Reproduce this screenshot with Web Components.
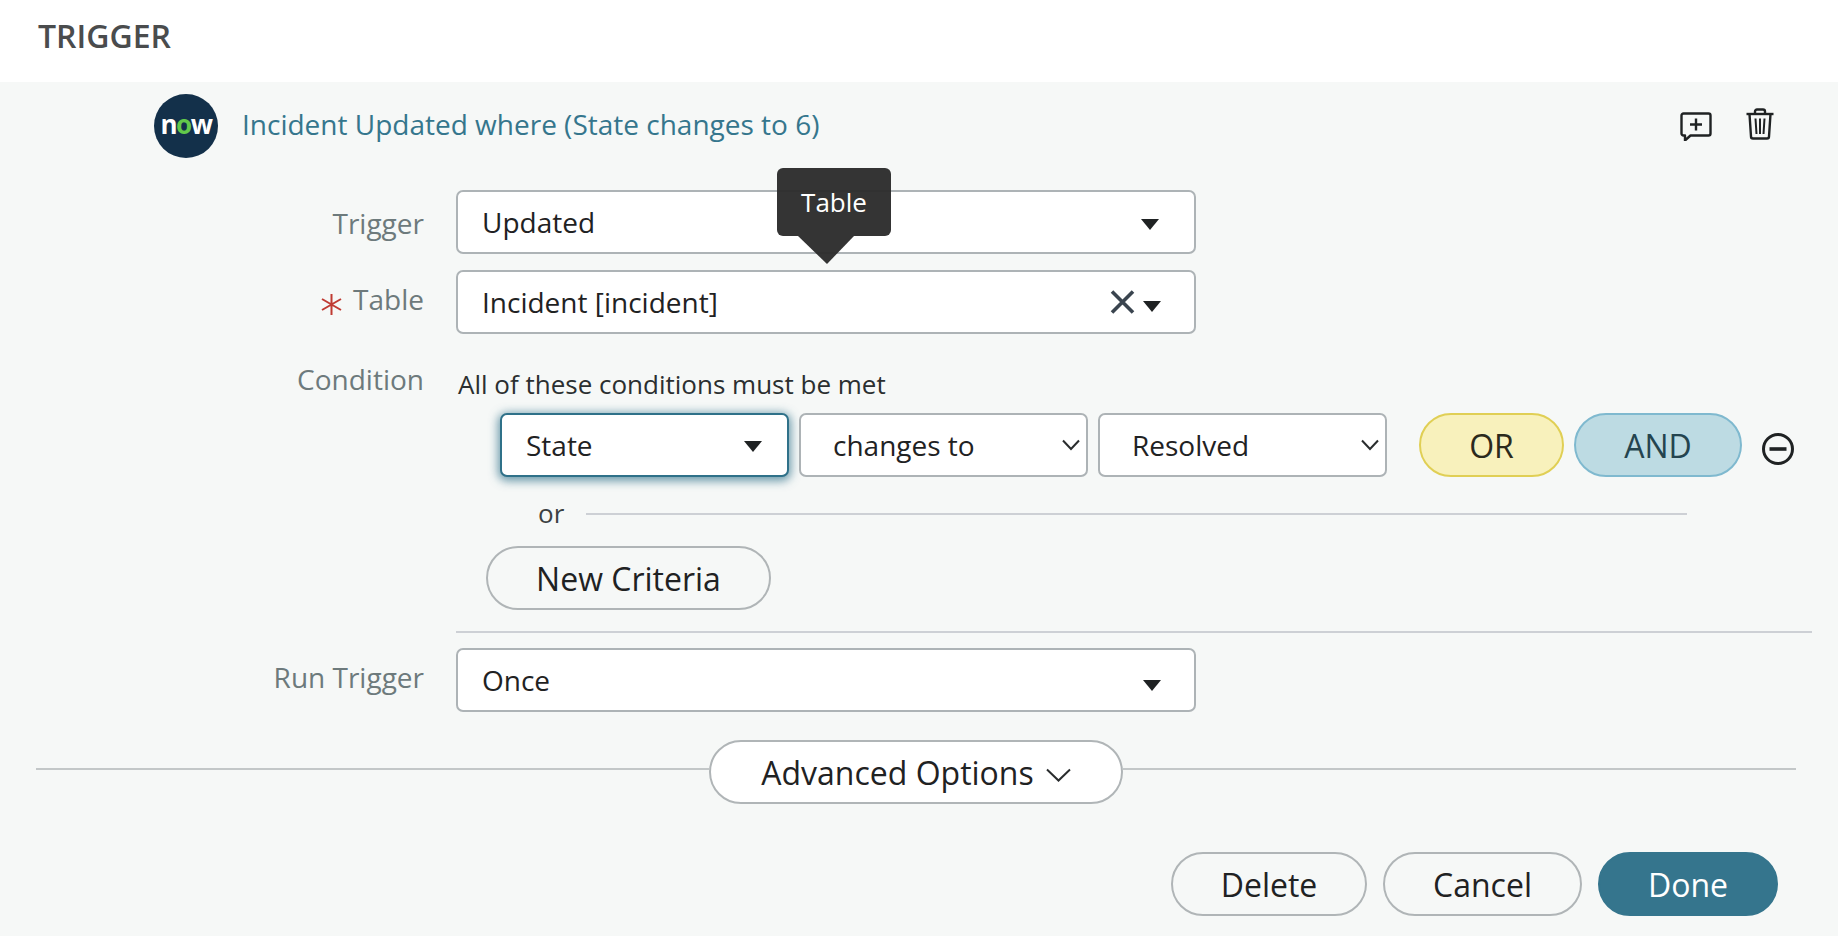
<!DOCTYPE html>
<html lang="en">
<head>
<meta charset="utf-8">
<title>Trigger</title>
<style>
  html, body { margin: 0; height: 100%; }
  body { background: #f6f8f7; font-family: "Open Sans", "Liberation Sans", sans-serif; color: #1f2223; overflow: hidden; }
</style>
</head>
<body>
<trigger-panel>
  <panel-heading>TRIGGER</panel-heading>
  <rule-title>Incident Updated where (State changes to 6)</rule-title>

  <form-row label="Trigger" label-shift="1" style="margin-top:32px">
    <drop-select caret="solid" style="width:740px;--caret-r:35px;--caret-y:5px">Updated</drop-select>
  </form-row>
  <form-row label="Table" label-shift="-3" required style="margin-top:15px">
    <drop-select caret="solid" clearable style="width:740px;--caret-r:33px;--caret-y:8px">Incident [incident]
      <hint-tip slot="over">Table</hint-tip>
    </drop-select>
  </form-row>
  <form-row label="Condition" compact style="margin-top:35px">
    <condition-block summary="All of these conditions must be met">
      <drop-select caret="solid" focused inset="24" style="width:289px;--caret-r:25px;--caret-y:2px">State</drop-select>
      <drop-select caret="chevron" inset="32" style="width:289px">changes to</drop-select>
      <drop-select caret="chevron" inset="32" style="width:289px">Resolved</drop-select>
    </condition-block>
  </form-row>
  <form-row label="Run Trigger" label-shift="-3" style="margin-top:15px">
    <drop-select caret="solid" style="width:740px;--caret-r:33px;--caret-y:10px">Once</drop-select>
  </form-row>

  <advanced-bar>Advanced Options</advanced-bar>

  <action-bar>
    <pill-button style="width:196px">Delete</pill-button>
    <pill-button style="width:199px">Cancel</pill-button>
    <pill-button variant="primary" style="width:180px">Done</pill-button>
  </action-bar>
</trigger-panel>

<script>
class TriggerPanel extends HTMLElement {
  constructor() {
    super();
    this.attachShadow({ mode: 'open' }).innerHTML = `
      <style>:host { display: block; font-family: "Open Sans", "Liberation Sans", sans-serif; }</style>
      <slot></slot>`;
  }
}

class PanelHeading extends HTMLElement {
  constructor() {
    super();
    this.attachShadow({ mode: 'open' }).innerHTML = `
      <style>
        :host { display: flex; align-items: center; height: 70px; padding: 0 0 12px 38px; background: #fff;
                font-size: 32px; font-weight: 600; color: #4a4c4d; }
      </style>
      <slot></slot>`;
  }
}

class RuleTitle extends HTMLElement {
  constructor() {
    super();
    this.attachShadow({ mode: 'open' }).innerHTML = `
      <style>
        :host { display: flex; align-items: center; padding: 12px 64px 0 154px; }
        .logo { width: 64px; height: 64px; border-radius: 50%; background: #13304a; color: #fff; flex: none;
                display: flex; align-items: center; justify-content: center;
                font: 700 26px/1 "Open Sans", sans-serif; letter-spacing: -1.5px; padding-bottom: 5px; box-sizing: border-box; }
        .logo b { color: #62c94a; font-weight: 700; }
        .text { flex: 1; margin-left: 24px; padding-bottom: 4px; font-size: 28px; color: #35768d; }
        .tools { display: flex; align-items: flex-start; gap: 34px; padding-bottom: 3px; }
        svg { display: block; fill: none; stroke: #1f2223; }
      </style>
      <span class="logo">n<b>o</b>w</span>
      <span class="text"><slot></slot></span>
      <span class="tools">
        <svg width="32" height="29" viewBox="0 0 32 29" stroke-width="2.4" style="margin-top:4px">
          <path d="M3.5 1.5h25a2 2 0 0 1 2 2v18a2 2 0 0 1-2 2H10.5l-5.500 5v-5H3.500a2 2 0 0 1-2-2v-18a2 2 0 0 1 2-2z" stroke-linejoin="round"/>
          <path d="M16 6.500v12M10 12.500h12"/>
        </svg>
        <svg width="28" height="32" viewBox="0 0 28 32" stroke-width="2.400">
          <path d="M0.500 6H27.500"/>
          <path d="M9 5.500V3.500a2 2 0 0 1 2-2h6a2 2 0 0 1 2 2v2"/>
          <path d="M3.500 6l1.500 22.500a2 2 0 0 0 2 2h14a2 2 0 0 0 2-2L24.500 6" stroke-linejoin="round"/>
          <path d="M9.500 10.500l1 15.500M14 10.500V26M18.500 10.500l-1 15.500" stroke-width="2"/>
        </svg>
      </span>`;
  }
}

class FormRow extends HTMLElement {
  constructor() {
    super();
    this.attachShadow({ mode: 'open' }).innerHTML = `
      <style>
        :host { display: grid; grid-template-columns: 424px 1fr; column-gap: 32px; align-items: start; }
        .label { display: flex; justify-content: flex-end; align-items: center; height: 64px; gap: 11px;
                 font-size: 28px; color: #6d7a7c; }
        :host([compact]) .label { height: 20px; }
        .star { width: 21px; height: 21px; margin-top: 11px; }
        svg { display: block; fill: none; stroke: #bf3b33; stroke-width: 2; }
      </style>
      <div class="label"></div>
      <div class="field"><slot></slot></div>`;
  }
  connectedCallback() {
    const box = this.shadowRoot.querySelector('.label');
    const shift = this.getAttribute('label-shift');
    if (shift) box.style.marginTop = shift + 'px';
    box.innerHTML = (this.hasAttribute('required')
      ? '<svg class="star" viewBox="0 0 21 21"><path d="M10.500 0V21M1 5l19 11M20 5L1 16"/></svg>' : '')
      + '<span>' + this.getAttribute('label') + '</span>';
  }
}

class DropSelect extends HTMLElement {
  constructor() {
    super();
    this.attachShadow({ mode: 'open' }).innerHTML = `
      <style>
        :host { display: block; position: relative; height: 64px; box-sizing: border-box; background: #fff;
                border: 2px solid #adb3b6; border-radius: 7px; font-size: 28px; color: #1f2223; }
        :host([focused]) { border-color: #2f7189; box-shadow: 0 2px 10px 2px rgba(47,113,137,.7); }
        .inner { display: flex; align-items: center; height: 100%; padding-right: var(--caret-r, 33px); }
        .text { flex: 1; white-space: nowrap; }
        .clear { display: none; margin-right: 8px; fill: none; stroke: #3a444f; stroke-width: 3.600; }
        :host([clearable]) .clear { display: block; }
        .caret { display: block; margin-top: var(--caret-y, 0); }
        :host([caret="chevron"]) .inner { padding-right: 6px; }
      </style>
      <div class="inner">
        <span class="text"><slot></slot></span>
        <svg class="clear" width="25" height="24" viewBox="0 0 25 24"><path d="M2 1.500L23 22.500M23 1.500L2 22.500"/></svg>
        <span class="holder"></span>
      </div>
      <slot name="over"></slot>`;
  }
  connectedCallback() {
    const chevron = this.getAttribute('caret') === 'chevron';
    this.shadowRoot.querySelector('.holder').innerHTML = chevron
      ? '<svg class="caret" width="18" height="12" viewBox="0 0 18 12" fill="none" stroke="#2a2d2e" stroke-width="2"><path d="M1 1.500l8 8.500 8-8.500"/></svg>'
      : '<svg class="caret" width="18" height="11" viewBox="0 0 18 11" fill="#1f2223"><path d="M0 0H18L9 11z"/></svg>';
    const inset = this.getAttribute('inset') || 24;
    this.shadowRoot.querySelector('.text').style.paddingLeft = inset + 'px';
  }
}

class HintTip extends HTMLElement {
  constructor() {
    super();
    this.attachShadow({ mode: 'open' }).innerHTML = `
      <style>
        :host { position: absolute; left: 319px; top: -104px; width: 114px; height: 68px; border-radius: 6px;
                background: rgba(44,44,44,.96); color: #fff; font-size: 26px;
                display: flex; align-items: center; justify-content: center; box-sizing: border-box; }
        svg { position: absolute; left: 21px; top: 68px; fill: rgba(44,44,44,.96); }
      </style>
      <slot></slot>
      <svg width="56" height="28" viewBox="0 0 56 28"><path d="M0 0H56L29 28z"/></svg>`;
  }
}

class ConditionBlock extends HTMLElement {
  constructor() {
    super();
    this.attachShadow({ mode: 'open' }).innerHTML = `
      <style>
        :host { display: block; }
        .summary { padding-left: 2px; font-size: 26px; line-height: 34px; color: #2b2f30; height: 33px; margin-bottom: 13px; margin-top: -2px; }
        .line { display: flex; padding-left: 44px; gap: 10px; }
        .joins { display: flex; gap: 10px; margin-left: 22px; }
        .minus { margin: 20px 0 0 10px; fill: none; stroke: #1f2223; display: block; }
        .or { display: flex; align-items: center; height: 38px; margin-top: 19px; padding-left: 82px; width: 1232px; box-sizing: border-box; font-size: 26px; color: #3c4142; }
        .or span { padding-bottom: 5px; }
        .or i { flex: none; width: 1101px; height: 2px; background: #cdd0d5; margin-left: 22px; margin-top: -2px; }
        .new { margin: 12px 0 0 30px; width: 285px; }
        .rule { height: 2px; width: 1356px; background: #cdd0d5; margin-top: 21px; }
      </style>
      <div class="summary"></div>
      <div class="line">
        <slot></slot>
        <div class="joins">
          <pill-button variant="or" style="width:145px">OR</pill-button>
          <pill-button variant="and" style="width:168px">AND</pill-button>
        </div>
        <svg class="minus" width="32" height="32" viewBox="0 0 32 32" stroke-width="3"><circle cx="16" cy="16" r="14.500"/><path d="M7.500 16H24.500" stroke-width="3.600"/></svg>
      </div>
      <div class="or"><span>or</span><i></i></div>
      <pill-button class="new">New Criteria</pill-button>
      <div class="rule"></div>`;
  }
  connectedCallback() {
    this.shadowRoot.querySelector('.summary').textContent = this.getAttribute('summary');
  }
}

class PillButton extends HTMLElement {
  constructor() {
    super();
    this.attachShadow({ mode: 'open' }).innerHTML = `
      <style>
        :host { display: flex; align-items: center; justify-content: center; height: 64px; box-sizing: border-box;
                border: 2px solid #b0b5b7; border-radius: 32px; font-size: 32px; color: #1f2223; cursor: pointer; }
        :host([variant="or"]) { background: #f8f1bc; border-color: #e0cf55; color: #2b2a1c; }
        :host([variant="and"]) { background: #bddbe3; border-color: #7fb9cf; color: #24444f; }
        :host([variant="primary"]) { background: #35758d; border-color: #35758d; color: #fff; }
      </style>
      <slot></slot>`;
  }
}

class AdvancedBar extends HTMLElement {
  constructor() {
    super();
    this.attachShadow({ mode: 'open' }).innerHTML = `
      <style>
        :host { display: flex; margin-top: 28px; padding-left: 36px; width: 1796px; box-sizing: border-box; }
        .line { flex: 1; height: 2px; background: #c3c7c8; margin-top: 28px; }
        .btn { flex: none; width: 414px; height: 64px; box-sizing: border-box; background: #fff; border: 2px solid #b0b5b7;
               border-radius: 32px; font-size: 32px; color: #1f2223;
               display: flex; align-items: center; justify-content: center; gap: 12px; }
        svg { fill: none; stroke: #2a2d2e; stroke-width: 2; margin-top: 6px; }
      </style>
      <div class="line"></div>
      <div class="btn"><span><slot></slot></span>
        <svg width="25" height="14" viewBox="0 0 25 14"><path d="M1 1.500l11.500 11 11.500-11"/></svg></div>
      <div class="line"></div>`;
  }
}

class ActionBar extends HTMLElement {
  constructor() {
    super();
    this.attachShadow({ mode: 'open' }).innerHTML = `
      <style>:host { display: flex; justify-content: flex-end; gap: 16px; margin-top: 48px; padding-right: 60px; }</style>
      <slot></slot>`;
  }
}

customElements.define('trigger-panel', TriggerPanel);
customElements.define('panel-heading', PanelHeading);
customElements.define('rule-title', RuleTitle);
customElements.define('form-row', FormRow);
customElements.define('drop-select', DropSelect);
customElements.define('hint-tip', HintTip);
customElements.define('pill-button', PillButton);
customElements.define('condition-block', ConditionBlock);
customElements.define('advanced-bar', AdvancedBar);
customElements.define('action-bar', ActionBar);
</script>
</body>
</html>
